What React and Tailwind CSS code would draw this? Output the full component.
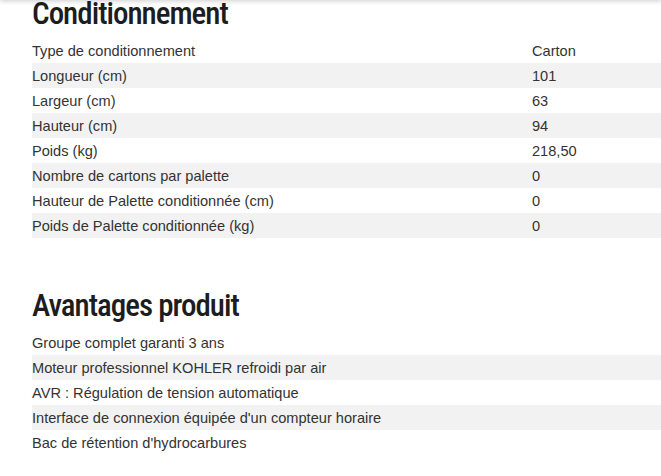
import React from 'react';

const packaging = [
    ['Type de conditionnement', 'Carton'],
    ['Longueur (cm)', '101'],
    ['Largeur (cm)', '63'],
    ['Hauteur (cm)', '94'],
    ['Poids (kg)', '218,50'],
    ['Nombre de cartons par palette', '0'],
    ['Hauteur de Palette conditionnée (cm)', '0'],
    ['Poids de Palette conditionnée (kg)', '0'],
];

const benefits = [
    'Groupe complet garanti 3 ans',
    'Moteur professionnel KOHLER refroidi par air',
    'AVR : Régulation de tension automatique',
    "Interface de connexion équipée d'un compteur horaire",
    "Bac de rétention d'hydrocarbures",
];

function Heading({ children, className = '' }) {
    return (
        <h2
            className={`text-[31px] leading-[36px] tracking-[-1px] text-[#1d1d1d] font-medium ${className}`}
            style={{ fontFamily: '"Roboto Condensed", "Liberation Sans Narrow", "Liberation Sans", sans-serif' }}
        >
            {children}
        </h2>
    );
}

export default function App() {
    return (
        <div className="relative w-[661px] h-[476px] overflow-hidden bg-white font-['Liberation_Sans',Arial,sans-serif] text-[14.6px] text-[#333]">
            {/* header shadow */}
            <div className="absolute left-0 right-0 -top-[10px] h-[10px] bg-white shadow-[0_1px_5px_rgba(0,0,0,0.2)] z-10" />

            <div className="pl-[32px]">
                <Heading className="mt-[-4px] mb-[6px]">Conditionnement</Heading>
                <div>
                    {packaging.map(([label, value], i) => (
                        <div key={label} className={`flex h-[25px] pt-[1px] leading-[24px] ${i % 2 ? 'bg-[#f2f2f2]' : ''}`}>
                            <span className="w-[500px]">{label}</span>
                            <span>{value}</span>
                        </div>
                    ))}
                </div>

                <Heading className="mt-[50px] mb-[6px]">Avantages produit</Heading>
                <div>
                    {benefits.map((item, i) => (
                        <div key={item} className={`h-[25px] pt-[1px] leading-[24px] ${i % 2 ? 'bg-[#f2f2f2]' : ''}`}>
                            {item}
                        </div>
                    ))}
                </div>
            </div>
        </div>
    );
}
